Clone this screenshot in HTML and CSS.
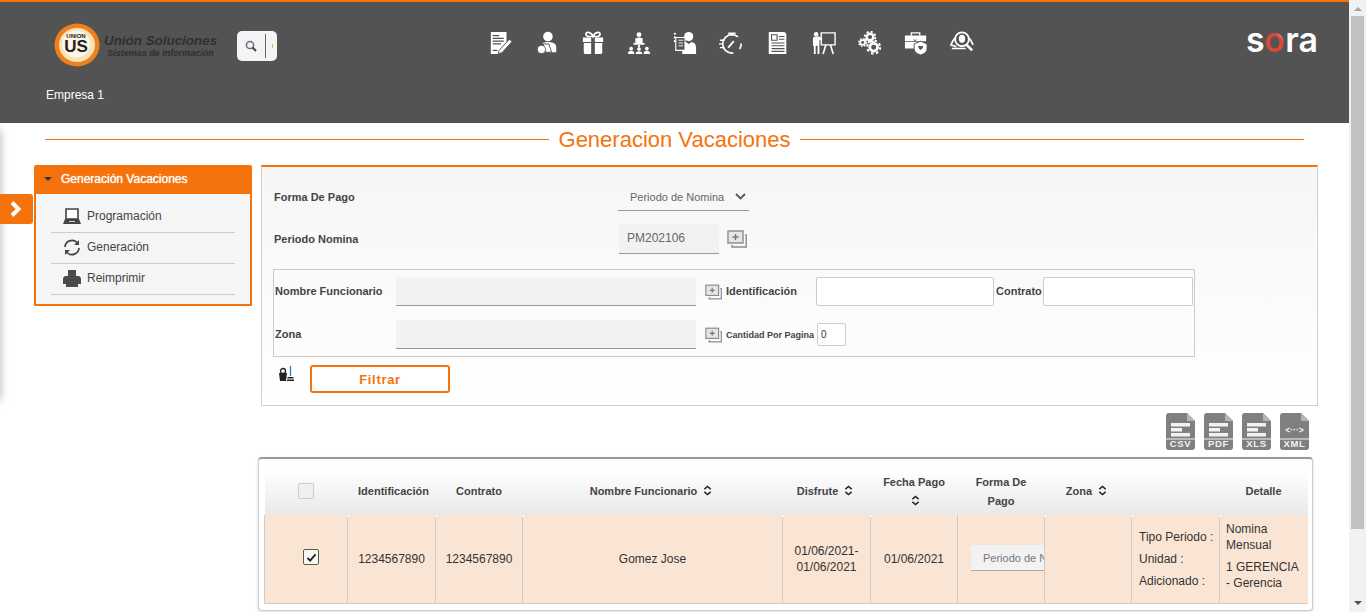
FILE: index.html
```html
<!DOCTYPE html>
<html lang="es">
<head>
  <meta charset="UTF-8">
  <title>Generacion Vacaciones</title>
  <link rel="stylesheet" href="styles.css">
</head>
<body>
  <svg class="defs" width="0" height="0">
    <symbol id="add-img" viewBox="0 0 20 18">
      <rect x="1" y="1" width="15" height="12" fill="#e6e6e6" stroke="#8c8c8c" stroke-width="1.400"/>
      <path d="M8.500 4v6M5.500 7h6" stroke="#777" stroke-width="1.400"/>
      <path d="M18 5h1.200v12H5v-2" fill="none" stroke="#8c8c8c" stroke-width="1.400"/>
    </symbol>
    <symbol id="sort" viewBox="0 0 10 12">
      <path d="M1.500 4.500L5 1.500l3.500 3M1.500 7.500l3.500 3 3.500-3" fill="none" stroke="#222" stroke-width="1.600"/>
    </symbol>
    <symbol id="file" viewBox="0 0 29 37">
      <path d="M3 0h18l8 8v26a3 3 0 0 1-3 3H3a3 3 0 0 1-3-3V3a3 3 0 0 1 3-3z" fill="#808080"/>
      <path d="M21 0l8 8h-8z" fill="#b5b5b5"/>
      <path d="M0 26h29" stroke="#f2f2f2" stroke-width="1"/>
    </symbol>
    <symbol id="lines" viewBox="0 0 29 37">
      <path d="M5 10h19v3.500H5zM5 15h11v3.500H5zM5 20h19v3.500H5z" fill="#f2f2f2"/>
    </symbol>
  </svg>

  <div class="page">
    <div class="content">
      <header class="topbar">
        <div class="topbar-row">
          <div class="logo">
            <svg class="logo-mark" width="46" height="44" viewBox="0 0 46 44">
              <ellipse cx="23" cy="22" rx="22.500" ry="21.500" fill="#f07f1e"/>
              <ellipse cx="23" cy="22" rx="18" ry="17" fill="#f7e3b8"/>
              <ellipse cx="22" cy="21" rx="14" ry="13.500" fill="#fdf6e6"/>
              <text x="22" y="15" class="logo-small">UNION</text>
              <text x="22" y="29" class="logo-big">US</text>
            </svg>
            <div class="logo-text">
              <span class="logo-name">Unión Soluciones</span>
              <span class="logo-sub">Sistemas de Información</span>
            </div>
          </div>
          <div class="search">
            <svg width="12" height="12" viewBox="0 0 12 12">
              <circle cx="5" cy="5" r="3.600" fill="none" stroke="#5d6f80" stroke-width="1.500"/>
              <path d="M7.500 7.500L11 11" stroke="#444" stroke-width="2"/>
            </svg>
            <span class="search-sep"></span>
            <span class="search-dot"></span>
          </div>
          <nav class="modules">
            <svg width="24" height="24" viewBox="0 0 26 26">
              <path d="M2 1h17v13l-7 8-1 3H2z" fill="#fff"/>
              <path d="M4 5h7M4 8h12M4 11h12M4 14h9M4 21h5" stroke="#535353" stroke-width="1.200"/>
              <path d="M11 21l11-12 3 2.500-11 12-4 1z" fill="#fff" stroke="#535353" stroke-width="1"/>
            </svg>
            <svg width="24" height="24" viewBox="0 0 26 26">
              <circle cx="14" cy="6" r="5.200" fill="#fff"/>
              <path d="M8 13q6-2 12 0 3 1 3 4v6h-6l-2-9H9z" fill="#fff"/>
              <path d="M9 14h6l3 9H11z" fill="#fff" stroke="#535353"/>
              <circle cx="7" cy="20" r="4.500" fill="#fff" stroke="#535353"/>
            </svg>
            <svg width="24" height="24" viewBox="0 0 26 26">
              <path d="M8 6C4 5 5 1 8 1.500c2 .3 4 2 5 4.500 1-2.500 3-4.200 5-4.500 3-.5 4 3.500 0 4.500z" fill="none" stroke="#fff" stroke-width="1.800"/>
              <path d="M2 7h9v5H2zM15 7h9v5h-9zM3 13h8v12H5a2 2 0 0 1-2-2zM15 13h8v10a2 2 0 0 1-2 2h-6z" fill="#fff"/>
            </svg>
            <svg width="24" height="24" viewBox="0 0 26 26">
              <circle cx="13" cy="4" r="2.600" fill="#fff"/>
              <path d="M9 8q4-2 8 0v5H9zM7 13h12v2H7z" fill="#fff"/>
              <path d="M12 15h2v3h-2z" fill="#fff"/>
              <g fill="#fff">
                <circle cx="4.500" cy="19" r="2"/><path d="M1 25q0-3.500 3.500-3.500T8 25z"/>
                <circle cx="13" cy="19.500" r="2"/><path d="M9.500 25q0-3 3.500-3t3.500 3z"/>
                <circle cx="21.500" cy="19" r="2"/><path d="M18 25q0-3.500 3.500-3.500T25 25z"/>
              </g>
            </svg>
            <svg width="24" height="24" viewBox="0 0 26 26">
              <circle cx="17" cy="6" r="5" fill="#fff"/>
              <path d="M10 25v-7q0-5 4-6l3 2 3-2q5 1 5 6v7z" fill="#fff"/>
              <path d="M3 7h10v14H3z" fill="#535353" stroke="#fff" stroke-width="1.200"/>
              <path d="M6 10h5M6 13h5M6 16h5" stroke="#fff"/>
              <circle cx="2" cy="3" r="1.200" fill="#fff"/><circle cx="2" cy="7" r="1.200" fill="#fff"/><circle cx="2" cy="11" r="1.200" fill="#fff"/>
            </svg>
            <svg width="24" height="24" viewBox="0 0 26 26">
              <circle cx="14" cy="14" r="10" fill="none" stroke="#fff" stroke-width="1.800" stroke-dasharray="40 8" stroke-dashoffset="-14"/>
              <path d="M10 1.500h8v2h-8zM13 3h2v2h-2z" fill="#fff"/>
              <path d="M10 18l6-7" stroke="#fff" stroke-width="2"/>
              <path d="M1 10h5M0 14h4M1 18h5" stroke="#fff" stroke-width="1.500"/>
            </svg>
            <svg width="24" height="24" viewBox="0 0 26 26">
              <path d="M3 1h17l2 2v22H3z" fill="#fff"/>
              <path d="M6 4h6v6H6zM14 6h6M14 9h6" stroke="#535353" stroke-width="1.200" fill="none"/>
              <path d="M6 13h14M6 16h14M6 19h14M6 22h14" stroke="#535353" stroke-width="1.300"/>
            </svg>
            <svg width="24" height="24" viewBox="0 0 26 26">
              <circle cx="4.500" cy="3.500" r="2.500" fill="#fff"/>
              <path d="M1 8q0-2 3.500-2H8l3 2v2H8v15H6v-9H4v9H2v-9H1z" fill="#fff"/>
              <path d="M10 2h15v13H10z" fill="none" stroke="#fff" stroke-width="1.500"/>
              <path d="M15 15l-3 10M20 15l3 10" stroke="#fff" stroke-width="1.800"/>
            </svg>
            <svg width="24" height="24" viewBox="0 0 26 26">
              <circle cx="13" cy="6.500" r="3.600" fill="none" stroke="#fff" stroke-width="2.600"/>
              <circle cx="13" cy="6.500" r="5.800" fill="none" stroke="#fff" stroke-width="2" stroke-dasharray="2.300 2.250"/>
              <circle cx="5" cy="12.500" r="2.600" fill="none" stroke="#fff" stroke-width="2"/>
              <circle cx="5" cy="12.500" r="4.200" fill="none" stroke="#fff" stroke-width="1.500" stroke-dasharray="1.700 1.600"/>
              <circle cx="17" cy="17.500" r="4.200" fill="none" stroke="#fff" stroke-width="3"/>
              <circle cx="17" cy="17.500" r="7" fill="none" stroke="#fff" stroke-width="2.200" stroke-dasharray="2.700 2.800"/>
            </svg>
            <svg width="24" height="24" viewBox="0 0 26 26">
              <path d="M8 5V2h9v3" fill="none" stroke="#fff" stroke-width="1.500"/>
              <path d="M1 5h23v6H1zM1 12h14v6h-2l-1 1H1z" fill="#fff"/>
              <path d="M10 8l2 2 2-2-2 4z" fill="#535353"/>
              <path d="M18 11l7 3v5q0 5-7 7-7-2-7-7v-5z" fill="#fff" stroke="#535353"/>
              <path d="M18 16.500q-3-1.500-2.500 1 .5 1.500 2.500 3 2-1.500 2.500-3 .5-2.500-2.500-1z" fill="#535353"/>
            </svg>
            <svg width="24" height="24" viewBox="0 0 26 26">
              <circle cx="13" cy="9" r="7.500" fill="none" stroke="#fff" stroke-width="2"/>
              <ellipse cx="13" cy="8.500" rx="3.400" ry="4.400" fill="#fff"/>
              <path d="M6 7q-3 3-5 8l6 2M20 7q3 3 5 8M2 19h15" fill="none" stroke="#fff" stroke-width="1.800"/>
              <path d="M18 15l6 6" stroke="#fff" stroke-width="2.800"/>
            </svg>
          </nav>
          <div class="sora">s<span class="sora-o">o</span>ra</div>
        </div>
        <div class="company">Empresa 1</div>
      </header>

      <div class="title-row">
        <span class="title-line"></span>
        <h1>Generacion Vacaciones</h1>
        <span class="title-line"></span>
      </div>

      <div class="columns">
        <aside class="side">
          <div class="side-head"><span class="caret"></span><span class="side-title">Generación Vacaciones</span></div>
          <ul class="side-list">
            <li>
              <svg width="18" height="17" viewBox="0 0 18 17">
                <path d="M3 1h12v10H3z" fill="#fff" stroke="#444" stroke-width="1.600"/>
                <path d="M2 11h14l2 5H0z" fill="#444"/>
                <path d="M6 13.500h6" stroke="#ccc"/>
              </svg>
              Programación
            </li>
            <li>
              <svg width="18" height="17" viewBox="0 0 18 17">
                <path d="M2 8a7 7 0 0 1 12-4.500M16 9a7 7 0 0 1-12 4.500" fill="none" stroke="#444" stroke-width="1.700"/>
                <path d="M16 1v5h-5zM2 16v-5h5z" fill="#444"/>
              </svg>
              Generación
            </li>
            <li>
              <svg width="18" height="17" viewBox="0 0 18 17">
                <path d="M5 0h8v6h3q2 1 2 3v5h-3v3H3v-3H0V9q0-2 2-3h3z" fill="#4a4a4a"/>
              </svg>
              Reimprimir
            </li>
          </ul>
        </aside>

        <main class="main">
          <section class="panel">
            <div class="field-row">
              <label class="field-label">Forma De Pago</label>
              <div class="select">Periodo de Nomina
                <svg width="11" height="7" viewBox="0 0 11 7"><path d="M1 1l4.500 4.500L10 1" fill="none" stroke="#555" stroke-width="1.800"/></svg>
              </div>
            </div>
            <div class="field-row period-row">
              <label class="field-label">Periodo Nomina</label>
              <div class="input-grey period">PM202106</div>
              <svg class="add-big" width="20" height="18"><use href="#add-img"/></svg>
            </div>

            <div class="filter-box">
              <div class="filter-row">
                <label class="filter-label">Nombre Funcionario</label>
                <div class="input-grey wide"></div>
                <svg class="add" width="17" height="16"><use href="#add-img"/></svg>
                <label class="id-label">Identificación</label>
                <div class="input-white id-input"></div>
                <label class="contract-label">Contrato</label>
                <div class="input-white contract-input"></div>
              </div>
              <div class="filter-row">
                <label class="filter-label">Zona</label>
                <div class="input-grey wide"></div>
                <svg class="add" width="17" height="16"><use href="#add-img"/></svg>
                <label class="qty-label">Cantidad Por Pagina</label>
                <div class="input-white qty-input">0</div>
              </div>
            </div>

            <div class="actions">
              <svg class="clean" width="17" height="16" viewBox="0 0 17 16">
                <path d="M1 7h8l-1 8H2z" fill="#222"/>
                <circle cx="5" cy="5" r="2.500" fill="none" stroke="#222" stroke-width="1.300"/>
                <path d="M12.500 0v10" stroke="#2f7fb8" stroke-width="1.300"/>
                <path d="M9.500 11h6v1.500h-6zM9 13.500h7V15H9z" fill="#222"/>
              </svg>
              <button class="btn-filter">Filtrar</button>
            </div>
          </section>

          <div class="exports">
            <div class="export"><svg width="29" height="37"><use href="#file"/><use href="#lines"/></svg><span>CSV</span></div>
            <div class="export"><svg width="29" height="37"><use href="#file"/><use href="#lines"/></svg><span>PDF</span></div>
            <div class="export"><svg width="29" height="37"><use href="#file"/><use href="#lines"/></svg><span>XLS</span></div>
            <div class="export"><svg width="29" height="37"><use href="#file"/></svg><span class="xml-code">&lt;···&gt;</span><span>XML</span></div>
          </div>

          <div class="card">
            <table class="grid">
              <colgroup>
                <col class="c-83"><col class="c-88"><col class="c-87"><col class="c-260"><col class="c-88"><col class="c-87"><col class="c-87"><col class="c-87"><col class="c-88"><col class="c-88">
              </colgroup>
              <thead>
                <tr>
                  <th><span class="check check-off"></span></th>
                  <th class="th-id">Identificación</th>
                  <th>Contrato</th>
                  <th class="sorted">Nombre Funcionario <svg class="sort" width="9" height="11"><use href="#sort"/></svg></th>
                  <th class="sorted">Disfrute <svg class="sort" width="9" height="11"><use href="#sort"/></svg></th>
                  <th>Fecha Pago<br><svg class="sort" width="9" height="11"><use href="#sort"/></svg></th>
                  <th>Forma De Pago</th>
                  <th class="sorted">Zona <svg class="sort" width="9" height="11"><use href="#sort"/></svg></th>
                  <th></th>
                  <th>Detalle</th>
                </tr>
              </thead>
              <tbody>
                <tr>
                  <td><span class="check check-on"><svg width="11" height="9" viewBox="0 0 12 10"><path d="M1.500 5.500L4.500 8.500 10.500 1.500" fill="none" stroke="#222" stroke-width="2"/></svg></span></td>
                  <td>1234567890</td>
                  <td>1234567890</td>
                  <td>Gomez Jose</td>
                  <td>01/06/2021-<br>01/06/2021</td>
                  <td>01/06/2021</td>
                  <td class="clip"><div class="row-select">Periodo de Nomina</div></td>
                  <td></td>
                  <td class="labels">
                    <div>Tipo Periodo :</div>
                    <div>Unidad :</div>
                    <div>Adicionado :</div>
                  </td>
                  <td class="values">
                    <div>Nomina Mensual</div>
                    <div>1 GERENCIA - Gerencia</div>
                  </td>
                </tr>
              </tbody>
            </table>
          </div>
        </main>
      </div>

      <div class="edge-shadow"></div>
      <div class="expander">
        <svg width="15" height="16" viewBox="0 0 15 16"><path d="M3 1.500L9.500 8 3 14.500" fill="none" stroke="#fff" stroke-width="4"/></svg>
      </div>
    </div>

    <div class="scrollbar">
      <span class="arrow-up"></span>
      <span class="thumb"></span>
      <span class="arrow-down"></span>
    </div>
  </div>
</body>
</html>
```

FILE: styles.css
```css
html, body {
  margin: 0;
  height: 100%;
  overflow: hidden;
}
body {
  font-family: "Liberation Sans", Arial, sans-serif;
  font-size: 12px;
  color: #333;
  background: #fff;
}
.defs {
  position: absolute;
}
.page {
  display: flex;
  height: 612px;
}
.content {
  position: relative;
  flex: 1;
  min-width: 0;
  overflow: hidden;
}

/* barra superior */
.topbar {
  height: 121px;
  background: #535353;
  border-top: 2px solid #f5730d;
}
.topbar-row {
  display: flex;
  align-items: flex-start;
  height: 85px;
  padding: 21px 31px 0 54px;
  box-sizing: border-box;
}
.logo {
  display: flex;
  align-items: center;
  width: 161px;
}
.logo-mark {
  flex: none;
}
.logo-small {
  font-size: 6px;
  font-weight: bold;
  text-anchor: middle;
  fill: #222;
}
.logo-big {
  font-size: 17px;
  font-weight: bold;
  text-anchor: middle;
  fill: #222;
}
.logo-text {
  display: flex;
  flex-direction: column;
  align-items: center;
  margin: 2px 0 0 4px;
  font-style: italic;
  font-weight: bold;
  color: #2f2f2f;
  white-space: nowrap;
}
.logo-name {
  font-size: 13.400px;
  line-height: 15px;
}
.logo-sub {
  font-size: 9px;
  line-height: 11px;
}
.search {
  display: flex;
  align-items: center;
  width: 40px;
  height: 30px;
  margin: 8px 0 0 22px;
  padding-left: 8px;
  box-sizing: border-box;
  background: #f4f4f4;
  border-radius: 5px;
}
.search-sep {
  width: 1px;
  height: 24px;
  margin-left: 8px;
  background: #666;
}
.search-dot {
  width: 1px;
  height: 4px;
  margin-left: 6px;
  background: #f5a54a;
}
.modules {
  display: flex;
  gap: 22.100px;
  margin: 8px 0 0 212px;
}
.sora {
  margin: -5px 0 0 auto;
  font-family: "Inter", sans-serif;
  font-size: 34px;
  font-weight: 600;
  line-height: 44px;
  color: #fff;
}
.sora-o {
  background: linear-gradient(45deg, #d9483b 60%, #fff 80%);
  -webkit-background-clip: text;
  background-clip: text;
  color: transparent;
}
.company {
  padding-left: 46px;
  color: #fff;
  line-height: 16px;
}

/* titulo */
.title-row {
  display: flex;
  align-items: center;
  gap: 10px;
  height: 33px;
  padding: 0 45px;
  margin-bottom: 9px;
}
.title-line {
  flex: 1;
  height: 1px;
  background: #f5730d;
}
h1 {
  margin: 0;
  font-size: 22px;
  font-weight: normal;
  line-height: 33px;
  color: #f5730d;
}

.columns {
  display: flex;
  align-items: flex-start;
  gap: 6px;
  padding-left: 34px;
}

/* menu lateral */
.side {
  flex: none;
  width: 218px;
  box-sizing: border-box;
  border: 2px solid #f5730d;
  border-top: 0;
  border-radius: 3px 3px 0 0;
  background: #f5f5f5;
}
.side-head {
  display: flex;
  align-items: center;
  height: 27px;
  margin: 0 -2px;
  padding: 0 0 2px 10px;
  background: #f5730d;
  border-radius: 3px 3px 0 0;
  color: #fff;
}
.side-title {
  text-shadow: 0 0 1px #fff;
}
.caret {
  width: 0;
  height: 0;
  margin-right: 9px;
  border: 4px solid transparent;
  border-top-color: #333;
  border-bottom: 0;
}
.side-list {
  list-style: none;
  margin: 8px 15px 9px;
  padding: 0;
}
.side-list li {
  display: flex;
  align-items: center;
  gap: 6px;
  height: 28px;
  padding: 0 0 2px 12px;
  border-bottom: 1px solid #ccc;
  color: #444;
}
.expander {
  position: absolute;
  left: 0;
  top: 194px;
  display: flex;
  align-items: center;
  justify-content: center;
  width: 33px;
  height: 30px;
  background: #f5730d;
  border-radius: 0 3px 3px 0;
  padding-right: 1px;
  box-sizing: border-box;
}
.edge-shadow {
  position: absolute;
  left: -6px;
  top: 130px;
  width: 6px;
  height: 270px;
  box-shadow: 0 0 8px rgba(0, 0, 0, .35);
}

/* filtros */
.main {
  flex: none;
  width: 1060px;
}
.panel {
  width: 1057px;
  margin-left: 3px;
  padding: 18px 12px 12px;
  box-sizing: border-box;
  border: 1px solid #d0d0d0;
  border-top: 2px solid #f5730d;
  background: linear-gradient(#f6f6f6, #fff);
}
.field-row {
  display: flex;
  align-items: center;
  height: 26px;
}
.period-row {
  height: 30px;
  margin-top: 13px;
}
.field-label {
  width: 344px;
  padding-bottom: 2px;
  font-size: 11px;
  font-weight: bold;
  color: #444;
}
.period-row .field-label {
  padding-bottom: 0;
}
.select {
  display: flex;
  align-items: center;
  justify-content: space-between;
  width: 131px;
  height: 26px;
  padding: 0 3px 2px 12px;
  box-sizing: border-box;
  border-bottom: 1px solid #999;
  font-size: 11px;
  color: #666;
}
.input-grey {
  box-sizing: border-box;
  height: 29px;
  background: #f2f2f2;
  border-bottom: 1px solid #999;
  border-radius: 2px 2px 0 0;
}
.period {
  width: 100px;
  height: 30px;
  margin-left: 1px;
  padding: 7px 8px;
  color: #666;
}
.add-big {
  margin-left: 8px;
}
.filter-box {
  width: 922px;
  margin: 15px 0 0 -1px;
  padding: 7px 0 7px 1px;
  box-sizing: border-box;
  border: 1px solid #ccc;
}
.filter-row {
  display: flex;
  align-items: center;
  height: 29px;
}
.filter-row + .filter-row {
  margin-top: 14px;
}
.filter-label {
  width: 121px;
  padding-bottom: 2px;
  font-size: 11px;
  font-weight: bold;
  color: #444;
}
.wide {
  width: 300px;
}
.add {
  margin: 0 4px 0 9px;
}
.id-label {
  width: 90px;
  padding-bottom: 2px;
  font-size: 11px;
  font-weight: bold;
  color: #444;
}
.input-white {
  box-sizing: border-box;
  height: 29px;
  background: #fff;
  border: 1px solid #ccc;
  border-radius: 2px;
}
.id-input {
  width: 178px;
}
.contract-label {
  width: 47px;
  margin-left: 2px;
  padding-bottom: 2px;
  font-size: 11px;
  font-weight: bold;
  color: #444;
}
.contract-input {
  width: 150px;
}
.qty-label {
  width: 91px;
  font-size: 9px;
  font-weight: bold;
  color: #444;
  white-space: nowrap;
}
.qty-input {
  width: 29px;
  height: 23px;
  padding-left: 3px;
  font-size: 10px;
  line-height: 21px;
}
.actions {
  display: flex;
  align-items: flex-start;
  margin-top: 8px;
  padding-left: 4px;
}
.clean {
  margin-top: 1px;
}
.btn-filter {
  width: 140px;
  height: 28px;
  margin-left: 15px;
  background: #fff;
  border: 2px solid #f5730d;
  border-radius: 3px;
  color: #f5730d;
  font-family: inherit;
  font-size: 13px;
  font-weight: bold;
  letter-spacing: .7px;
}

/* exportar */
.exports {
  display: flex;
  justify-content: flex-end;
  gap: 9px;
  padding: 7px 9px 7px 0;
}
.export {
  position: relative;
  width: 29px;
  height: 37px;
}
.export svg {
  display: block;
}
.export span {
  position: absolute;
  left: 0;
  right: 0;
  bottom: 1px;
  text-align: center;
  font-size: 9.500px;
  font-weight: bold;
  line-height: 10px;
  letter-spacing: .7px;
  color: #f2f2f2;
}
.export .xml-code {
  bottom: 15px;
  font-size: 8.500px;
  letter-spacing: 0;
}

/* tabla */
.card {
  box-sizing: border-box;
  width: 1055px;
  padding: 11px 5px 6px;
  border: 1px solid #ccc;
  border-top: 2px solid #999;
  border-radius: 4px;
  box-shadow: 0 1px 3px rgba(0, 0, 0, .15);
}
.grid {
  width: 1043px;
  table-layout: fixed;
  border-collapse: collapse;
}
.c-83 { width: 83px; }
.c-87 { width: 87px; }
.c-88 { width: 88px; }
.c-260 { width: 260px; }
.grid th {
  height: 45px;
  padding: 0 4px 2px;
  box-sizing: border-box;
  background: linear-gradient(#fff, #e8e8e8);
  font-size: 11px;
  line-height: 19px;
  color: #444;
}
.grid th.th-id {
  padding-left: 8px;
}
.grid th.sorted {
  padding-right: 7px;
}
.grid td {
  position: relative;
  height: 88px;
  padding: 0 4px;
  box-sizing: border-box;
  background: #fae5d5;
  border-left: 1px solid #ccc;
  border-bottom: 1px solid #ccc;
  text-align: center;
  line-height: 16px;
}
.grid td + td::before {
  content: "";
  position: absolute;
  left: -2px;
  top: 0;
  border: 2px solid transparent;
  border-top: 0;
  border-bottom-color: #fff;
}
.sort {
  margin-left: 3px;
  vertical-align: -1px;
}
.check {
  display: inline-block;
  box-sizing: border-box;
  width: 16px;
  height: 16px;
  border-radius: 2px;
  vertical-align: middle;
}
.check-off {
  margin-bottom: 2px;
  background: #f0f0f0;
  border: 1px solid #ccc;
}
.check-on {
  margin: 0 0 4px 10px;
  background: #f7f7f7;
  border: 1px solid #4f6236;
}
.check-on svg {
  display: block;
  margin: 3px 0 0 2px;
}
.grid td.clip {
  overflow: hidden;
  padding: 0 0 2px 13px;
}
.row-select {
  width: 120px;
  height: 26px;
  padding-left: 12px;
  box-sizing: border-box;
  background: #f2f2f2;
  border-bottom: 1px solid #aaa;
  border-radius: 2px 0 0 0;
  font-size: 11px;
  line-height: 26px;
  text-align: left;
  white-space: nowrap;
  color: #777;
}
.grid td.labels {
  padding: 0 0 0 7px;
  text-align: left;
  line-height: 22px;
  white-space: nowrap;
}
.grid td.values {
  padding: 0 6px 5px;
  text-align: left;
}
.values div + div {
  margin-top: 6px;
}

/* barra de desplazamiento */
.scrollbar {
  flex: none;
  display: flex;
  flex-direction: column;
  align-items: center;
  width: 17px;
  background: #f1f1f1;
}
.arrow-up {
  width: 0;
  height: 0;
  margin: 7px 0 5px;
  border: 4px solid transparent;
  border-top: 0;
  border-bottom: 4px solid #a3a3a3;
}
.thumb {
  width: 13px;
  height: 513px;
  background: #c1c1c1;
}
.arrow-down {
  width: 0;
  height: 0;
  margin-top: auto;
  margin-bottom: 7px;
  border: 4px solid transparent;
  border-bottom: 0;
  border-top: 4px solid #505050;
}
```
